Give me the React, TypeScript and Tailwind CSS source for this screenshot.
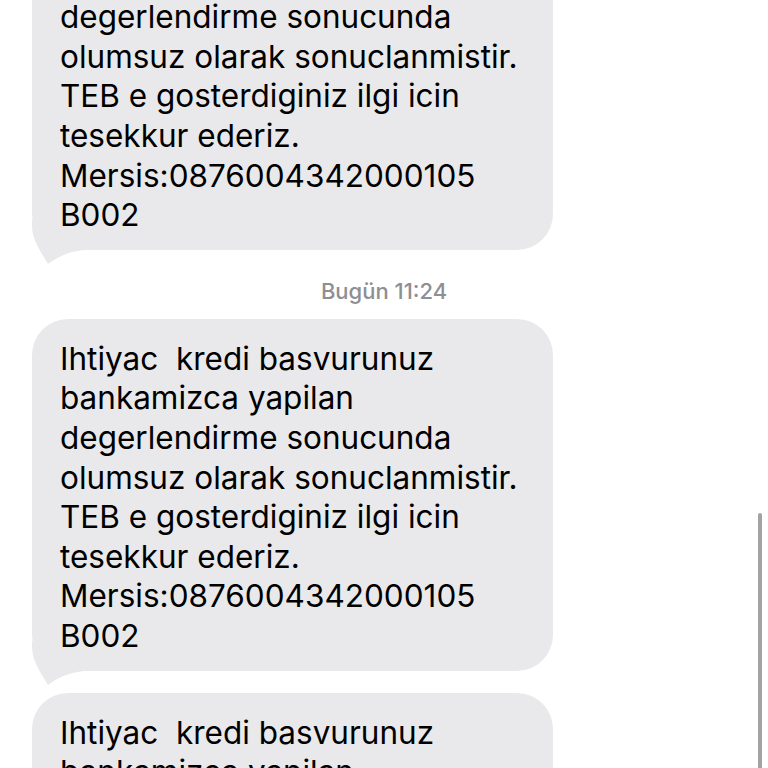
import React from 'react';

const LINES = [
  'Ihtiyac\u00a0 kredi basvurunuz',
  'bankamizca yapilan',
  'degerlendirme sonucunda',
  'olumsuz olarak sonuclanmistir.',
  'TEB e gosterdiginiz ilgi icin',
  'tesekkur ederiz.',
  'Mersis:0876004342000105',
  'B002',
];

function Tail() {
  return (
    <svg
      className="absolute left-0 bottom-[-14px]"
      width="52"
      height="44"
      viewBox="0 0 52 44"
      fill="#e9e9eb"
    >
      <path d="M0 0 L0 6 C0 20 9 32 16 44 C24 38 34 32 52 30 L52 0 Z" />
    </svg>
  );
}

function Bubble({ lines }: { lines: string[] }) {
  return (
    <div className="relative ml-8 w-[521px]">
      <div className="relative z-10 rounded-[36px] bg-[#e9e9eb] pl-7 pt-[20px] pb-[15px] text-[31.5px] leading-[39.6px] text-black">
        {lines.map((l, i) => (
          <div key={i} className="whitespace-pre">{l}</div>
        ))}
      </div>
      <Tail />
    </div>
  );
}

export default function App() {
  return (
    <div
      className="relative h-[768px] w-[768px] overflow-hidden bg-white"
      style={{ fontFamily: 'Inter, "Noto Sans", sans-serif' }}
    >
      <div className="mt-[-102px] flex flex-col">
        <Bubble lines={LINES} />
        <div className="mt-[29px] mb-[16px] text-center text-[22px] font-medium leading-[24px] text-[#8e8e93]">
          Bugün 11:24
        </div>
        <Bubble lines={LINES} />
        <div className="h-[22px]" />
        <Bubble lines={LINES} />
      </div>
      <div className="absolute right-[6px] top-[513px] h-[270px] w-[4px] rounded-full bg-[#a3a3a3]" />
    </div>
  );
}
